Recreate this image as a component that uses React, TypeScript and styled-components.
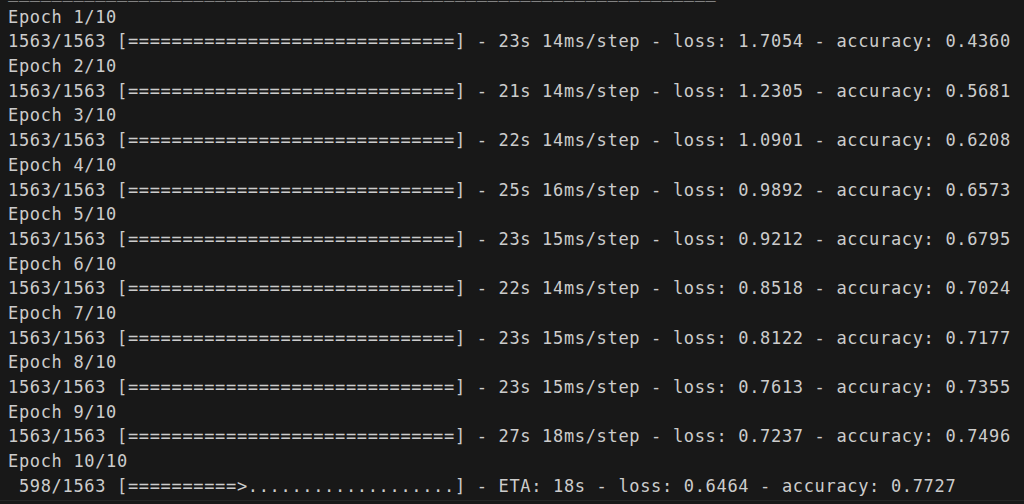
import React from "react";
import styled, { createGlobalStyle } from "styled-components";

const Global = createGlobalStyle`
  html, body { margin: 0; padding: 0; background: #181818; }
  #root { width: 1024px; height: 504px; }
`;

const Terminal = styled.div`
  width: 1024px;
  height: 504px;
  background: #181818;
  overflow: hidden;
  box-sizing: border-box;
  position: relative;
`;

const Log = styled.pre`
  margin: -20px 0 0 0;
  padding: 0 0 0 8px;
  font-family: "DejaVu Sans Mono", "Liberation Mono", monospace;
  font-size: 17px;
  letter-spacing: 0.665px;
  line-height: 24.7px;
  color: #cccccc;
  white-space: pre;
`;

const Line = styled.div`
  height: 24.7px;
`;

const BottomEdge = styled.div`
  position: absolute;
  left: 0;
  right: 0;
  bottom: 3px;
  height: 1px;
  background: #262626;
`;

const results: [string, string, string, string][] = [
  ["23s", "14ms", "1.7054", "0.4360"],
  ["21s", "14ms", "1.2305", "0.5681"],
  ["22s", "14ms", "1.0901", "0.6208"],
  ["25s", "16ms", "0.9892", "0.6573"],
  ["23s", "15ms", "0.9212", "0.6795"],
  ["22s", "14ms", "0.8518", "0.7024"],
  ["23s", "15ms", "0.8122", "0.7177"],
  ["23s", "15ms", "0.7613", "0.7355"],
  ["27s", "18ms", "0.7237", "0.7496"],
];

export default function App() {
  const lines: string[] = ["_".repeat(65)];
  results.forEach(([t, s, l, a], i) => {
    lines.push(`Epoch ${i + 1}/10`);
    lines.push(
      `1563/1563 [${"=".repeat(30)}] - ${t} ${s}/step - loss: ${l} - accuracy: ${a}`
    );
  });
  lines.push("Epoch 10/10");
  lines.push(
    ` 598/1563 [${"=".repeat(10)}>${".".repeat(19)}] - ETA: 18s - loss: 0.6464 - accuracy: 0.7727`
  );
  return (
    <Terminal>
      <Global />
      <Log>
        {lines.map((l, i) => (
          <Line key={i}>{l}</Line>
        ))}
      </Log>
      <BottomEdge />
    </Terminal>
  );
}
